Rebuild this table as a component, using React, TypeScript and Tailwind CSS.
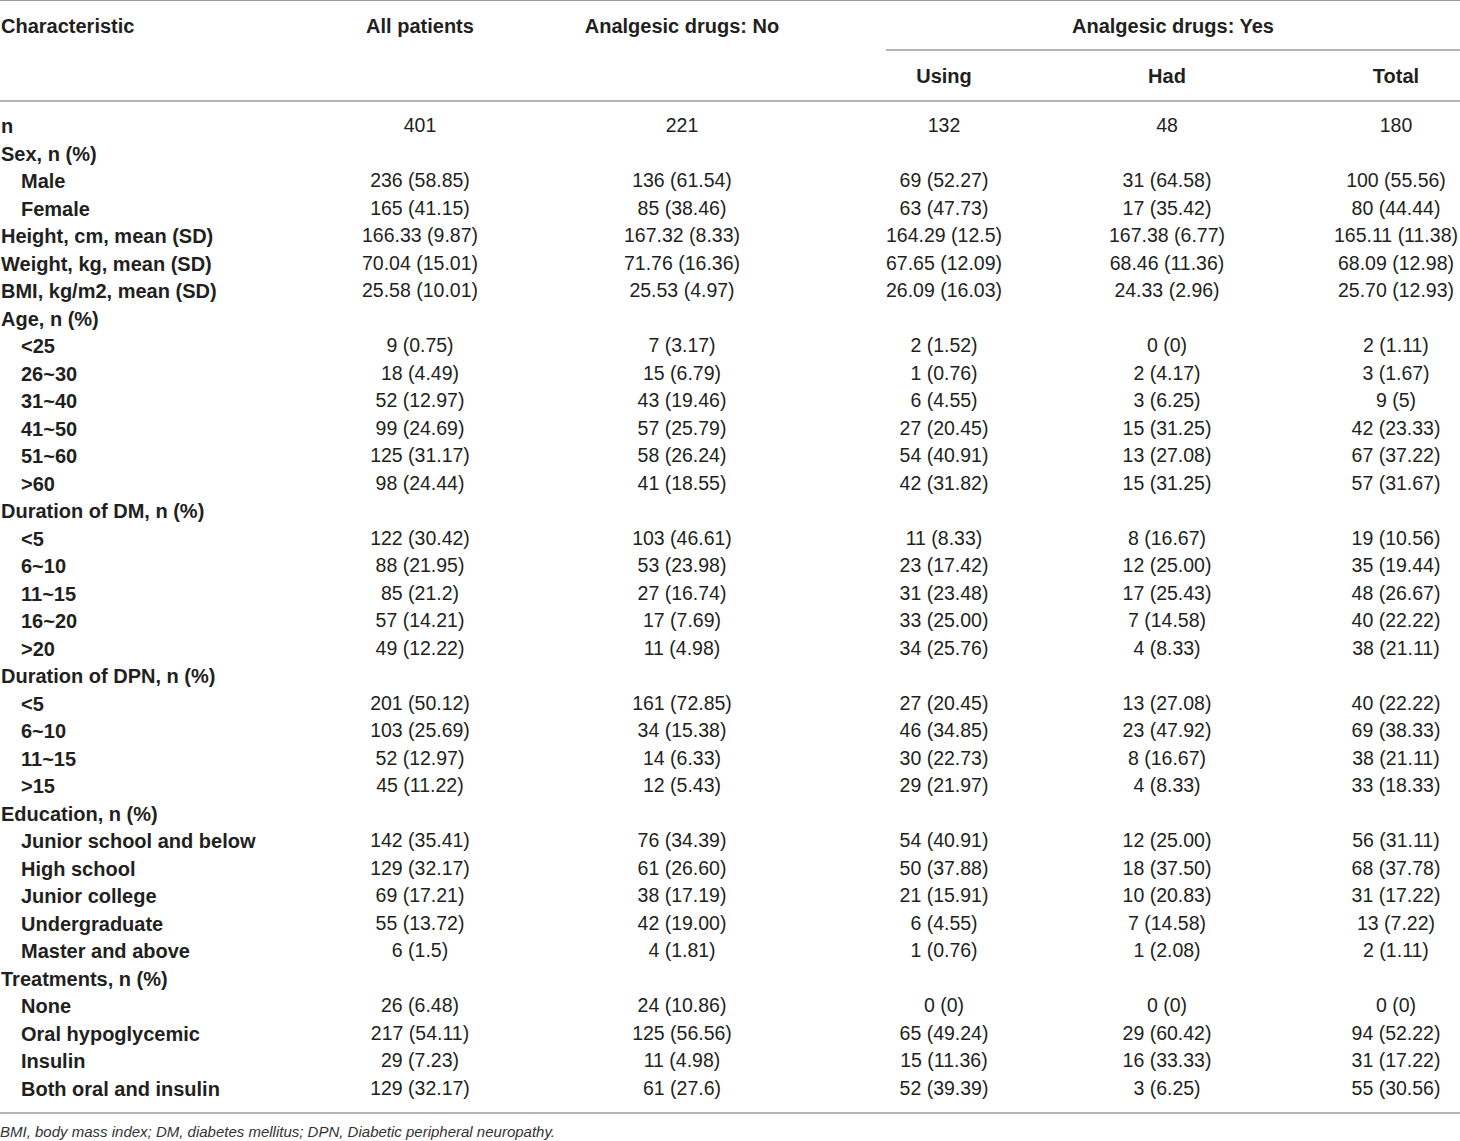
import React from "react";

type Row = { label: string; sub?: boolean; vals?: string[] };

const rows: Row[] = [
  { label: "n", vals: ["401", "221", "132", "48", "180"] },
  { label: "Sex, n (%)" },
  { label: "Male", sub: true, vals: ["236 (58.85)", "136 (61.54)", "69 (52.27)", "31 (64.58)", "100 (55.56)"] },
  { label: "Female", sub: true, vals: ["165 (41.15)", "85 (38.46)", "63 (47.73)", "17 (35.42)", "80 (44.44)"] },
  { label: "Height, cm, mean (SD)", vals: ["166.33 (9.87)", "167.32 (8.33)", "164.29 (12.5)", "167.38 (6.77)", "165.11 (11.38)"] },
  { label: "Weight, kg, mean (SD)", vals: ["70.04 (15.01)", "71.76 (16.36)", "67.65 (12.09)", "68.46 (11.36)", "68.09 (12.98)"] },
  { label: "BMI, kg/m2, mean (SD)", vals: ["25.58 (10.01)", "25.53 (4.97)", "26.09 (16.03)", "24.33 (2.96)", "25.70 (12.93)"] },
  { label: "Age, n (%)" },
  { label: "<25", sub: true, vals: ["9 (0.75)", "7 (3.17)", "2 (1.52)", "0 (0)", "2 (1.11)"] },
  { label: "26~30", sub: true, vals: ["18 (4.49)", "15 (6.79)", "1 (0.76)", "2 (4.17)", "3 (1.67)"] },
  { label: "31~40", sub: true, vals: ["52 (12.97)", "43 (19.46)", "6 (4.55)", "3 (6.25)", "9 (5)"] },
  { label: "41~50", sub: true, vals: ["99 (24.69)", "57 (25.79)", "27 (20.45)", "15 (31.25)", "42 (23.33)"] },
  { label: "51~60", sub: true, vals: ["125 (31.17)", "58 (26.24)", "54 (40.91)", "13 (27.08)", "67 (37.22)"] },
  { label: ">60", sub: true, vals: ["98 (24.44)", "41 (18.55)", "42 (31.82)", "15 (31.25)", "57 (31.67)"] },
  { label: "Duration of DM, n (%)" },
  { label: "<5", sub: true, vals: ["122 (30.42)", "103 (46.61)", "11 (8.33)", "8 (16.67)", "19 (10.56)"] },
  { label: "6~10", sub: true, vals: ["88 (21.95)", "53 (23.98)", "23 (17.42)", "12 (25.00)", "35 (19.44)"] },
  { label: "11~15", sub: true, vals: ["85 (21.2)", "27 (16.74)", "31 (23.48)", "17 (25.43)", "48 (26.67)"] },
  { label: "16~20", sub: true, vals: ["57 (14.21)", "17 (7.69)", "33 (25.00)", "7 (14.58)", "40 (22.22)"] },
  { label: ">20", sub: true, vals: ["49 (12.22)", "11 (4.98)", "34 (25.76)", "4 (8.33)", "38 (21.11)"] },
  { label: "Duration of DPN, n (%)" },
  { label: "<5", sub: true, vals: ["201 (50.12)", "161 (72.85)", "27 (20.45)", "13 (27.08)", "40 (22.22)"] },
  { label: "6~10", sub: true, vals: ["103 (25.69)", "34 (15.38)", "46 (34.85)", "23 (47.92)", "69 (38.33)"] },
  { label: "11~15", sub: true, vals: ["52 (12.97)", "14 (6.33)", "30 (22.73)", "8 (16.67)", "38 (21.11)"] },
  { label: ">15", sub: true, vals: ["45 (11.22)", "12 (5.43)", "29 (21.97)", "4 (8.33)", "33 (18.33)"] },
  { label: "Education, n (%)" },
  { label: "Junior school and below", sub: true, vals: ["142 (35.41)", "76 (34.39)", "54 (40.91)", "12 (25.00)", "56 (31.11)"] },
  { label: "High school", sub: true, vals: ["129 (32.17)", "61 (26.60)", "50 (37.88)", "18 (37.50)", "68 (37.78)"] },
  { label: "Junior college", sub: true, vals: ["69 (17.21)", "38 (17.19)", "21 (15.91)", "10 (20.83)", "31 (17.22)"] },
  { label: "Undergraduate", sub: true, vals: ["55 (13.72)", "42 (19.00)", "6 (4.55)", "7 (14.58)", "13 (7.22)"] },
  { label: "Master and above", sub: true, vals: ["6 (1.5)", "4 (1.81)", "1 (0.76)", "1 (2.08)", "2 (1.11)"] },
  { label: "Treatments, n (%)" },
  { label: "None", sub: true, vals: ["26 (6.48)", "24 (10.86)", "0 (0)", "0 (0)", "0 (0)"] },
  { label: "Oral hypoglycemic", sub: true, vals: ["217 (54.11)", "125 (56.56)", "65 (49.24)", "29 (60.42)", "94 (52.22)"] },
  { label: "Insulin", sub: true, vals: ["29 (7.23)", "11 (4.98)", "15 (11.36)", "16 (33.33)", "31 (17.22)"] },
  { label: "Both oral and insulin", sub: true, vals: ["129 (32.17)", "61 (27.6)", "52 (39.39)", "3 (6.25)", "55 (30.56)"] },
];

const grid = "grid grid-cols-[362px_116px_408px_116px_330px_128px]";

export default function App() {
  return (
    <div
      className="w-[1460px] bg-white text-[#231f20]"
      style={{ fontFamily: '"Liberation Sans", Arial, sans-serif' }}
    >
      <div className="h-[1px] bg-[#9c9c9c]" />
      <div className={`${grid} grid-rows-[50px_49px] text-[20px] font-bold leading-[27px]`}>
        <div className="row-span-2 pt-[12px] pl-[1px]">Characteristic</div>
        <div className="row-span-2 pt-[12px] flex justify-center whitespace-nowrap">All patients</div>
        <div className="row-span-2 pt-[12px] flex justify-center whitespace-nowrap">Analgesic drugs: No</div>
        <div className="col-span-3 flex flex-col">
          <div className="flex-1 flex items-center justify-center pt-[2px]">Analgesic drugs: Yes</div>
          <div className="h-[2px] bg-[#b5b5b5]" />
        </div>
        <div className="flex items-center justify-center pt-[2px]">Using</div>
        <div className="flex items-center justify-center pt-[2px]">Had</div>
        <div className="flex items-center justify-center pt-[2px]">Total</div>
      </div>
      <div className="h-[2px] bg-[#b5b5b5]" />
      <div className="pt-[9px] pb-[11px]">
        {rows.map((r, i) => (
          <div key={i} className={`${grid} h-[27.5px] items-center`}>
            <div className={`text-[20px] font-bold whitespace-nowrap ${r.sub ? "pl-[21px]" : "pl-[1px]"}`}>
              {r.label}
            </div>
            {(r.vals ?? ["", "", "", "", ""]).map((v, j) => (
              <div key={j} className="text-[19.5px] text-center whitespace-nowrap">
                {v}
              </div>
            ))}
          </div>
        ))}
      </div>
      <div className="h-[2px] bg-[#b5b5b5]" />
      <div className="pt-[8px] text-[15px] italic leading-[20px] text-[#333]">
        BMI, body mass index; DM, diabetes mellitus; DPN, Diabetic peripheral neuropathy.
      </div>
    </div>
  );
}
